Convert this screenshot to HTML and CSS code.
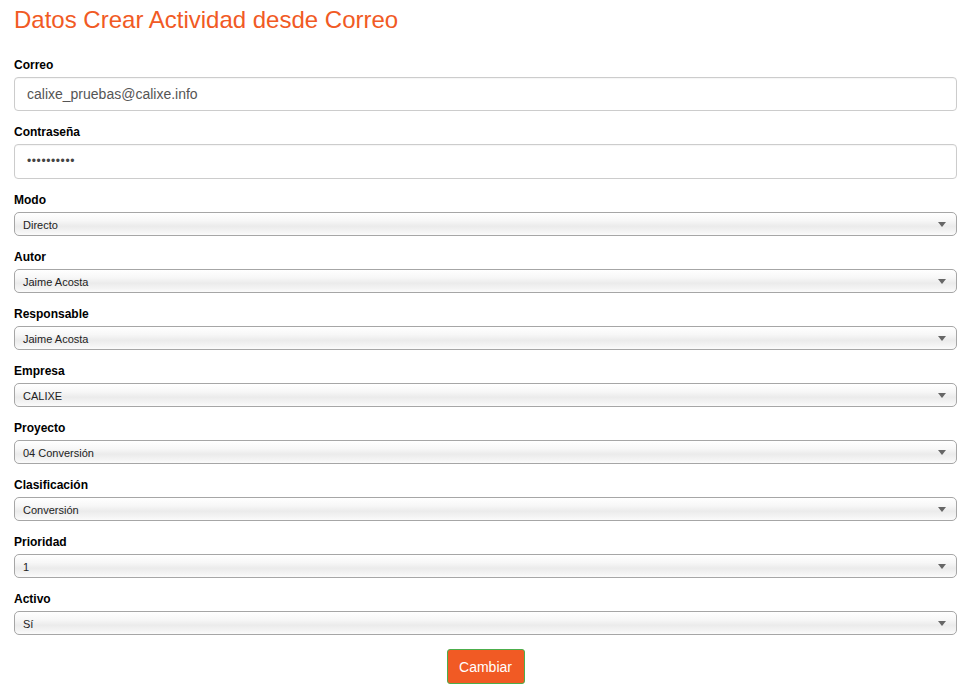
FILE: index.html
```html
<!DOCTYPE html>
<html lang="es">
<head>
<meta charset="utf-8">
<title>Datos Crear Actividad desde Correo</title>
<link rel="stylesheet" href="styles.css">
</head>
<body>
<div class="page">
  <h1 class="title">Datos Crear Actividad desde Correo</h1>
  <form class="form">
    <div class="group">
      <label class="label">Correo</label>
      <div class="input">calixe_pruebas@calixe.info</div>
    </div>
    <div class="group">
      <label class="label">Contraseña</label>
      <div class="input pass">••••••••••</div>
    </div>
    <div class="group">
      <label class="label">Modo</label>
      <div class="select"><span>Directo</span><i class="arrow"></i></div>
    </div>
    <div class="group">
      <label class="label">Autor</label>
      <div class="select"><span>Jaime Acosta</span><i class="arrow"></i></div>
    </div>
    <div class="group">
      <label class="label">Responsable</label>
      <div class="select"><span>Jaime Acosta</span><i class="arrow"></i></div>
    </div>
    <div class="group">
      <label class="label">Empresa</label>
      <div class="select"><span>CALIXE</span><i class="arrow"></i></div>
    </div>
    <div class="group">
      <label class="label">Proyecto</label>
      <div class="select"><span>04 Conversión</span><i class="arrow"></i></div>
    </div>
    <div class="group">
      <label class="label">Clasificación</label>
      <div class="select"><span>Conversión</span><i class="arrow"></i></div>
    </div>
    <div class="group">
      <label class="label">Prioridad</label>
      <div class="select"><span>1</span><i class="arrow"></i></div>
    </div>
    <div class="group">
      <label class="label">Activo</label>
      <div class="select"><span>Sí</span><i class="arrow"></i></div>
    </div>
    <div class="actions">
      <button type="button" class="btn">Cambiar</button>
    </div>
  </form>
</div>
</body>
</html>
```

FILE: styles.css
```css
* { box-sizing: border-box; }
html, body { margin: 0; padding: 0; background: #fff; }
body { font-family: "Liberation Sans", Arial, sans-serif; color: #333; }

.page { padding: 6px 12px 0 14px; }

.title {
  margin: 0 0 23px 0;
  font-size: 24px;
  line-height: 28px;
  font-weight: normal;
  color: #f15a24;
}

.form { display: flex; flex-direction: column; }

.group { display: flex; flex-direction: column; margin-bottom: 13px; }

.label {
  display: block;
  font-size: 12px;
  line-height: 15px;
  font-weight: bold;
  color: #000;
  padding-top: 1px;
  margin-bottom: 4px;
}

.input {
  height: 34px;
  border: 1px solid #ccc;
  border-radius: 4px;
  padding: 0 12px;
  font-size: 14px;
  line-height: 32px;
  color: #555;
  box-shadow: inset 0 1px 1px rgba(0,0,0,0.04);
}
.input.pass {
  height: 35px;
  line-height: 33px;
  font-size: 12px;
  letter-spacing: 0.6px;
  color: #444;
}

.select {
  position: relative;
  height: 24px;
  border: 1px solid #a6a6a6;
  border-radius: 5px;
  padding: 1px 8px 0;
  font-size: 11px;
  line-height: 22px;
  color: #222;
  background: linear-gradient(#ffffff 0%, #f7f7f7 35%, #ebebeb 60%, #f4f4f4 85%, #fbfbfb 100%);
}
.arrow {
  position: absolute;
  right: 10px;
  top: 9px;
  width: 0;
  height: 0;
  border-left: 4px solid transparent;
  border-right: 4px solid transparent;
  border-top: 5px solid #666;
}

.actions { display: flex; justify-content: center; padding-top: 1px; }

.btn {
  width: 78px;
  height: 35px;
  background: #f15a24;
  border: 1px solid #4cae4c;
  border-radius: 3px;
  color: #fff;
  font-family: "Liberation Sans", Arial, sans-serif;
  font-size: 14px;
  padding: 0;
}
```
